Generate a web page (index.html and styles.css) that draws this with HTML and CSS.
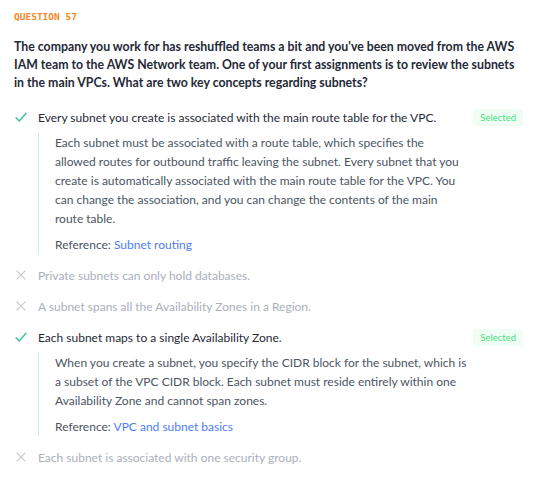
FILE: index.html
```html
<!DOCTYPE html>
<html>
<head>
<meta charset="utf-8">
<link rel="stylesheet" href="styles.css">
</head>
<body>
<div class="quiz">
  <div class="qlabel">QUESTION 57</div>
  <div class="qtext">The company you work for has reshuffled teams a bit and you've been moved from the AWS IAM team to the AWS Network team. One of your first assignments is to review the subnets in the main VPCs. What are two key concepts regarding subnets?</div>
  <div class="options">
    <div class="option correct">
      <div class="row">
        <svg class="icon" viewBox="0 0 16 16"><path d="M2 8.5l4 4 8-9" fill="none" stroke="#34c38f" stroke-width="1.6"/></svg>
        <span class="otext">Every subnet you create is associated with the main route table for the VPC.</span>
        <span class="badge">Selected</span>
      </div>
      <div class="explain">
        <p>Each subnet must be associated with a route table, which specifies the<br>allowed routes for outbound traffic leaving the subnet. Every subnet that you create is automatically associated with the main route table for the VPC. You can change the association, and you can change the contents of the main route table.</p>
        <p class="ref">Reference: <a href="#">Subnet routing</a></p>
      </div>
    </div>
    <div class="option wrong">
      <div class="row">
        <svg class="icon" viewBox="0 0 16 16"><path d="M3 3l10 10M13 3L3 13" fill="none" stroke="#c4c8d2" stroke-width="1.4"/></svg>
        <span class="otext">Private subnets can only hold databases.</span>
      </div>
    </div>
    <div class="option wrong">
      <div class="row">
        <svg class="icon" viewBox="0 0 16 16"><path d="M3 3l10 10M13 3L3 13" fill="none" stroke="#c4c8d2" stroke-width="1.4"/></svg>
        <span class="otext">A subnet spans all the Availability Zones in a Region.</span>
      </div>
    </div>
    <div class="option correct">
      <div class="row">
        <svg class="icon" viewBox="0 0 16 16"><path d="M2 8.5l4 4 8-9" fill="none" stroke="#34c38f" stroke-width="1.6"/></svg>
        <span class="otext">Each subnet maps to a single Availability Zone.</span>
        <span class="badge">Selected</span>
      </div>
      <div class="explain">
        <p>When you create a subnet, you specify the CIDR block for the subnet, which is a subset of the VPC CIDR block. Each subnet must reside entirely within one Availability Zone and cannot span zones.</p>
        <p class="ref">Reference: <a href="#">VPC and subnet basics</a></p>
      </div>
    </div>
    <div class="option wrong">
      <div class="row">
        <svg class="icon" viewBox="0 0 16 16"><path d="M3 3l10 10M13 3L3 13" fill="none" stroke="#c4c8d2" stroke-width="1.4"/></svg>
        <span class="otext">Each subnet is associated with one security group.</span>
      </div>
    </div>
  </div>
</div>
</body>
</html>
```

FILE: styles.css
```css
body {
  margin: 0;
  background: #fff;
  font-family: "Lato", "Open Sans", sans-serif;
  color: #1f2937;
}
.quiz {
  padding: 11px 14px 0 14px;
}
.qlabel {
  font-family: "DejaVu Sans Mono", monospace;
  font-size: 9.5px;
  font-weight: bold;
  color: #f5882c;
  height: 14px;
}
.qtext {
  margin-top: 13px;
  font-size: 12.3px;
  font-weight: 700;
  line-height: 18px;
  color: #1f2937;
}
.options {
  margin-top: 15px;
  display: flex;
  flex-direction: column;
  gap: 11px;
}
.row {
  display: flex;
  align-items: center;
  height: 20px;
}
.icon {
  width: 14px;
  height: 14px;
  flex: none;
  margin-right: 10px;
}
.otext {
  font-size: 12px;
  flex: 1;
  color: #1f2937;
}
.wrong .otext {
  color: #a9afbd;
}
.badge {
  flex: none;
  font-size: 9.5px;
  color: #4ade80;
  background: #f0fdf4;
  border-radius: 3px;
  padding: 3px 7px;
  margin-right: 3px;
}
.explain {
  margin: 6px 0 0 24px;
  border-left: 1px solid #c6f3e0;
  padding: 0 0 0 16px;
  max-width: 413px;
}
.explain p {
  margin: 0;
  font-size: 12px;
  line-height: 19px;
  color: #4b5563;
}
.explain p.ref {
  margin-top: 7px;
}
.explain a {
  color: #4f7df7;
  text-decoration: none;
}
```
